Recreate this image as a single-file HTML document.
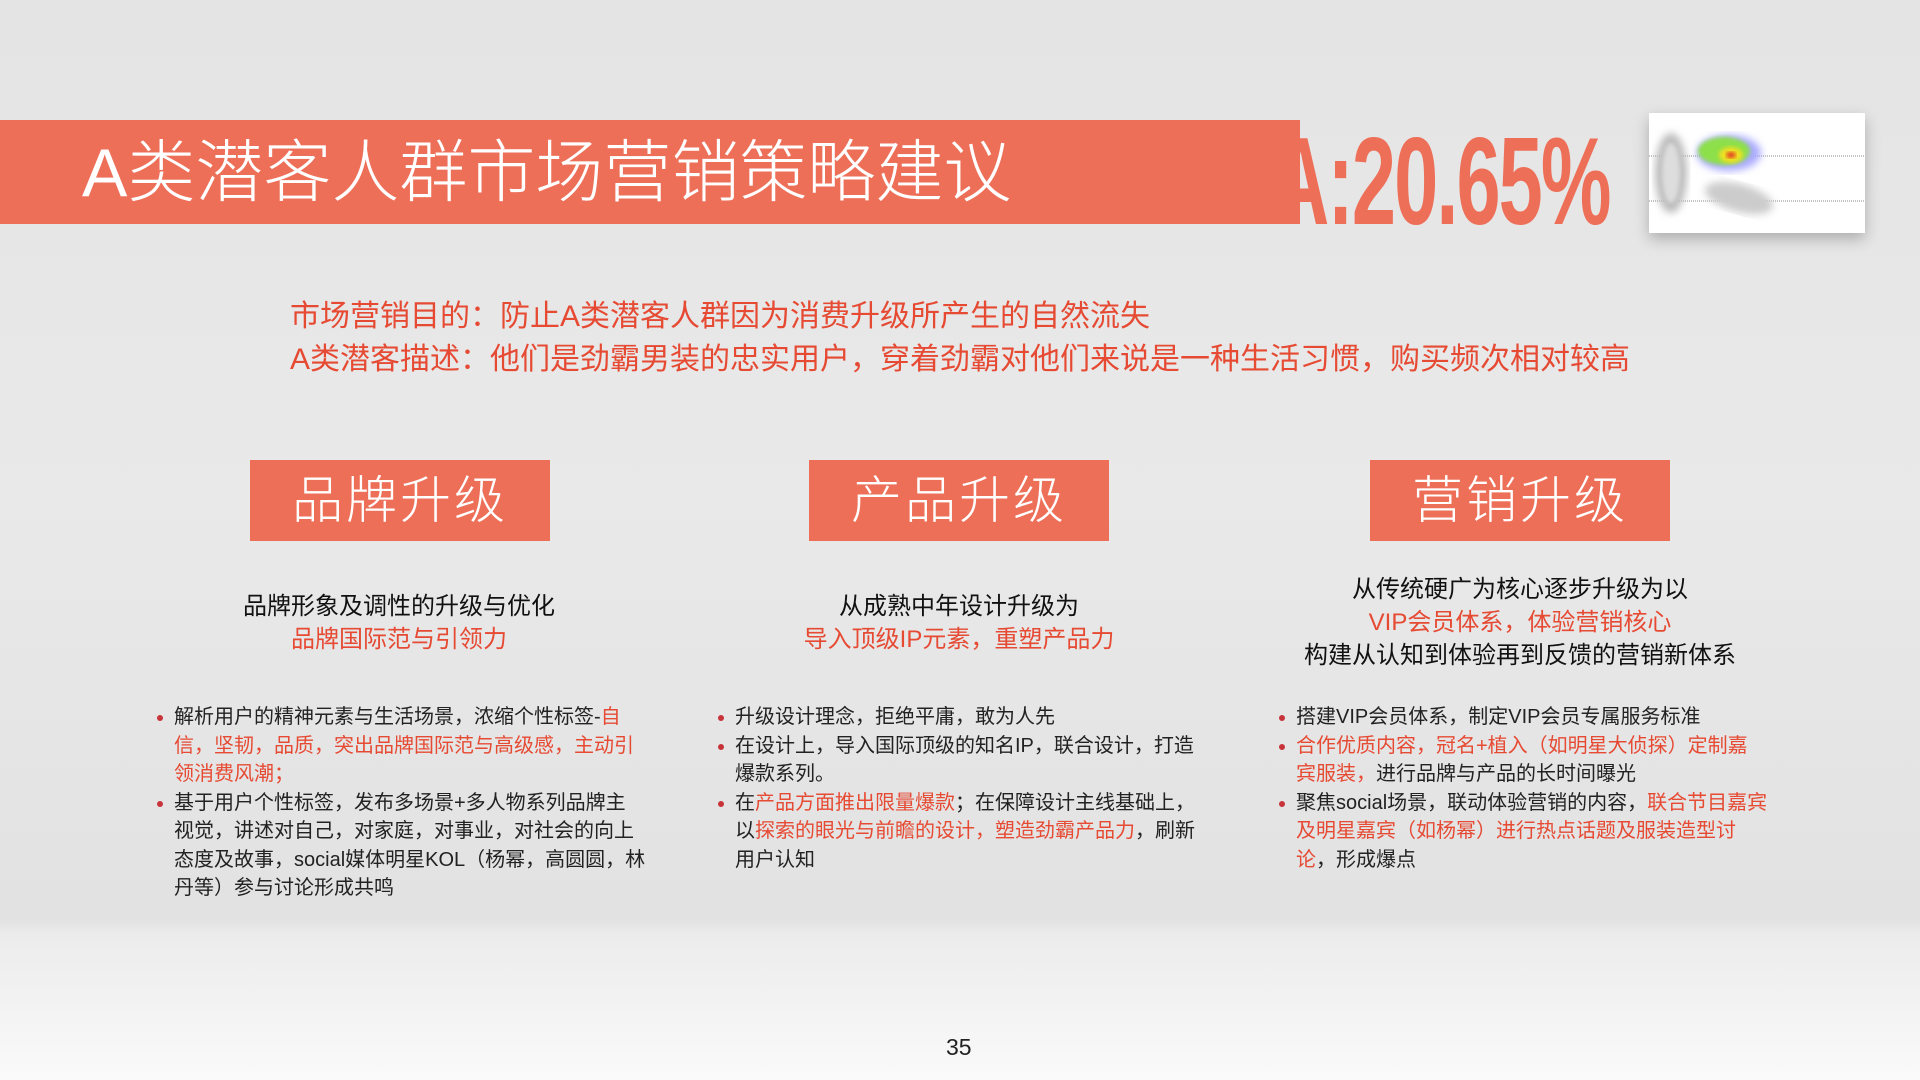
<!DOCTYPE html>
<html><head><meta charset="utf-8"><style>
*{margin:0;padding:0;box-sizing:border-box}
body{width:1920px;height:1080px;overflow:hidden;position:relative;font-family:"Liberation Sans","Noto Sans CJK SC",sans-serif;
background:linear-gradient(180deg,#e4e4e4 0px,#e9e9e9 500px,#e2e2e2 920px,#ececec 935px,#fafafa 1080px);}
.bar{position:absolute;left:0;top:120px;width:1300px;height:104px;background:#ee6f58}
.title{position:absolute;left:82px;top:128px;font-size:68px;color:#fff;font-weight:300;white-space:nowrap;line-height:90px;font-family:"Liberation Sans","Noto Sans CJK SC Light","Noto Sans CJK SC",sans-serif}
.pct{position:absolute;left:1272px;top:126px;font-size:124px;line-height:112px;font-weight:bold;color:#ee6f58;transform:scaleX(0.64);transform-origin:left top;white-space:nowrap;letter-spacing:-3px}
.heat{position:absolute;left:1649px;top:113px;width:216px;height:120px;background:#fff;box-shadow:0 6px 14px rgba(0,0,0,.25);overflow:hidden}
.sub{position:absolute;left:290px;font-size:30px;color:#e64a33;white-space:nowrap}
.box{position:absolute;top:460px;width:300px;height:81px;background:#ee6f58;color:#fff;font-size:51px;text-align:center;line-height:81px;letter-spacing:3px;font-weight:300}
.hd{position:absolute;width:560px;text-align:center;font-size:24px;line-height:33px;color:#111}
.r{color:#e64a33}
ul{position:absolute;list-style:none;font-size:20px;line-height:28.5px;color:#222;top:703px;white-space:nowrap}
li{position:relative;padding-left:0}
li:before{content:"";position:absolute;left:-17px;top:12px;width:6px;height:6px;border-radius:50%;background:#c8333a}
.pn{position:absolute;left:946px;top:1034px;font-size:23px;color:#222}
</style></head><body>
<div class="bar"></div>
<div class="title">A类潜客人群市场营销策略建议</div>
<div class="pct">A:20.65%</div>
<div class="heat">
<svg width="216" height="120" viewBox="0 0 216 120">
<defs><filter id="b"><feGaussianBlur stdDeviation="4"/></filter><filter id="b2"><feGaussianBlur stdDeviation="2"/></filter></defs>
<line x1="0" y1="43" x2="216" y2="43" stroke="#888" stroke-dasharray="1 1"/>
<line x1="0" y1="88" x2="216" y2="88" stroke="#888" stroke-dasharray="1 1"/>
<ellipse cx="22" cy="60" rx="16" ry="40" fill="#bbb" filter="url(#b)"/>
<ellipse cx="22" cy="60" rx="9" ry="30" fill="#ddd" filter="url(#b2)"/>
<ellipse cx="90" cy="85" rx="35" ry="14" fill="#ccc" filter="url(#b)" transform="rotate(15 90 85)"/>
<ellipse cx="80" cy="40" rx="32" ry="18" fill="#a9a9ff" filter="url(#b)"/>
<ellipse cx="75" cy="38" rx="26" ry="14" fill="#8de04a" filter="url(#b2)"/>
<ellipse cx="82" cy="42" rx="12" ry="8" fill="#f0e020" filter="url(#b2)"/>
<ellipse cx="82" cy="42" rx="5" ry="3" fill="#e03020" filter="url(#b2)"/>
</svg></div>
<div class="sub" style="top:291px">市场营销目的：防止A类潜客人群因为消费升级所产生的自然流失</div>
<div class="sub" style="top:334px">A类潜客描述：他们是劲霸男装的忠实用户，穿着劲霸对他们来说是一种生活习惯，购买频次相对较高</div>

<div class="box" style="left:250px">品牌升级</div>
<div class="box" style="left:809px">产品升级</div>
<div class="box" style="left:1370px">营销升级</div>

<div class="hd" style="left:119px;top:590px">品牌形象及调性的升级与优化<br><span class="r">品牌国际范与引领力</span></div>
<div class="hd" style="left:679px;top:590px">从成熟中年设计升级为<br><span class="r">导入顶级IP元素，重塑产品力</span></div>
<div class="hd" style="left:1240px;top:573px">从传统硬广为核心逐步升级为以<br><span class="r">VIP会员体系，体验营销核心</span><br>构建从认知到体验再到反馈的营销新体系</div>

<ul style="left:174px">
<li>解析用户的精神元素与生活场景，浓缩个性标签-<span class="r">自<br>信，坚韧，品质，突出品牌国际范与高级感，主动引<br>领消费风潮；</span></li>
<li>基于用户个性标签，发布多场景+多人物系列品牌主<br>视觉，讲述对自己，对家庭，对事业，对社会的向上<br>态度及故事，social媒体明星KOL（杨幂，高圆圆，林<br>丹等）参与讨论形成共鸣</li>
</ul>
<ul style="left:735px">
<li>升级设计理念，拒绝平庸，敢为人先</li>
<li>在设计上，导入国际顶级的知名IP，联合设计，打造<br>爆款系列。</li>
<li>在<span class="r">产品方面推出限量爆款</span>；在保障设计主线基础上，<br>以<span class="r">探索的眼光与前瞻的设计，塑造劲霸产品力</span>，刷新<br>用户认知</li>
</ul>
<ul style="left:1296px">
<li>搭建VIP会员体系，制定VIP会员专属服务标准</li>
<li><span class="r">合作优质内容，冠名+植入（如明星大侦探）定制嘉<br>宾服装，</span>进行品牌与产品的长时间曝光</li>
<li>聚焦social场景，联动体验营销的内容，<span class="r">联合节目嘉宾<br>及明星嘉宾（如杨幂）进行热点话题及服装造型讨<br>论</span>，形成爆点</li>
</ul>
<div class="pn">35</div>
</body></html>
